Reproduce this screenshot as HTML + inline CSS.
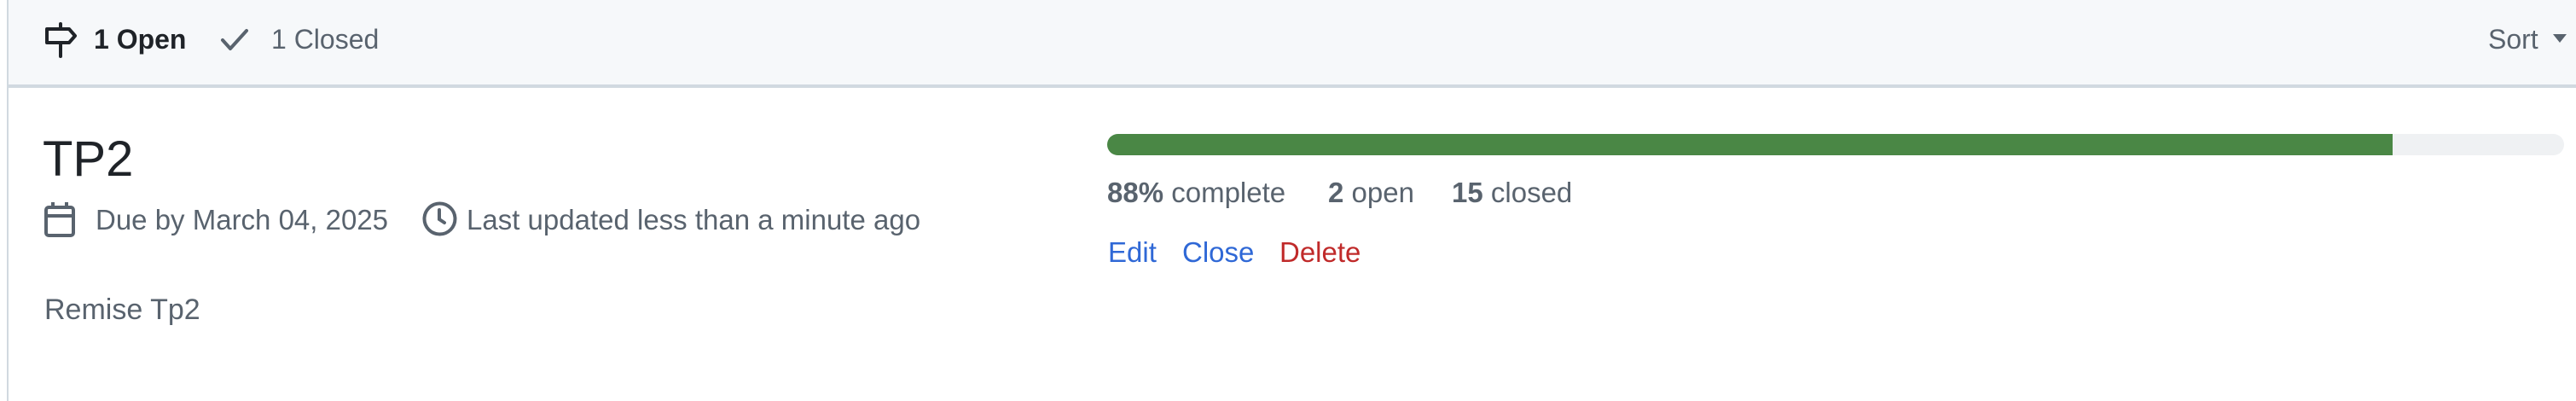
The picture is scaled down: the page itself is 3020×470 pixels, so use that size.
<!DOCTYPE html>
<html><head><meta charset="utf-8"><style>
*{margin:0;padding:0;box-sizing:border-box}
body{width:3020px;height:470px;background:#fff;font-family:"Liberation Sans",sans-serif;position:relative;overflow:hidden;color:#59636e}
.hdr{position:absolute;left:8px;top:0;width:3012px;height:103px;background:#f6f8fa;border-bottom:4px solid #d1d9e0}
.lb{position:absolute;left:8px;top:0;width:2px;height:470px;background:#d1d9e0}
.t{position:absolute;white-space:nowrap;font-size:33px;line-height:1}
svg{position:absolute}
b{color:#59636e}
</style></head><body>
<div class="hdr"></div><div class="lb"></div>
<svg style="left:51px;top:26px" width="40" height="42" viewBox="0 0 40 42" fill="none" stroke="#1f2328" stroke-width="4" stroke-linejoin="round" stroke-linecap="round"><path d="M20 2v6M20 24v16M4 8h26l7 8-7 8H4z"/></svg>
<div class="t" style="left:110px;top:30px;font-weight:bold;color:#1f2328;font-size:32px">1 Open</div>
<svg style="left:258px;top:32px" width="34" height="30" viewBox="0 0 34 30" fill="none" stroke="#59636e" stroke-width="4" stroke-linecap="round" stroke-linejoin="round"><path d="M3 15l9 10L31 4"/></svg>
<div class="t" style="left:318px;top:30px;font-size:32px">1 Closed</div>
<div class="t" style="left:2917px;top:30px;font-size:32px">Sort</div>
<svg style="left:2993px;top:40px" width="16" height="12"><path d="M0 0h16L8 10z" fill="#59636e"/></svg>
<div class="t" style="left:50px;top:158px;font-size:58px;color:#1f2328">TP2</div>
<svg style="left:52px;top:236px" width="36" height="42" viewBox="0 0 36 42" fill="none" stroke="#59636e" stroke-width="4"><rect x="2" y="7" width="32" height="33" rx="3"/><path d="M2 17h32M10 1v8M26 1v8"/></svg>
<div class="t" style="left:112px;top:241px">Due by March 04, 2025</div>
<svg style="left:495px;top:236px" width="41" height="41" viewBox="0 0 41 41" fill="none" stroke="#59636e" stroke-width="4" stroke-linecap="round"><circle cx="20.5" cy="20.5" r="18"/><path d="M20 10v11l6 4"/></svg>
<div class="t" style="left:547px;top:241px">Last updated less than a minute ago</div>
<div class="t" style="left:52px;top:346px;font-size:34px">Remise Tp2</div>
<div style="position:absolute;left:1298px;top:157px;width:1708px;height:25px;border-radius:13px;background:#eff1f3;overflow:hidden"><div style="width:1507px;height:25px;background:#4a8745"></div></div>
<div class="t" style="left:1298px;top:209px"><b>88%</b> complete</div>
<div class="t" style="left:1557px;top:209px"><b>2</b> open</div>
<div class="t" style="left:1702px;top:209px"><b>15</b> closed</div>
<div class="t" style="left:1299px;top:279px;color:#2f68d6">Edit</div>
<div class="t" style="left:1386px;top:279px;color:#2f68d6">Close</div>
<div class="t" style="left:1500px;top:279px;color:#c02a2a">Delete</div>
</body></html>
